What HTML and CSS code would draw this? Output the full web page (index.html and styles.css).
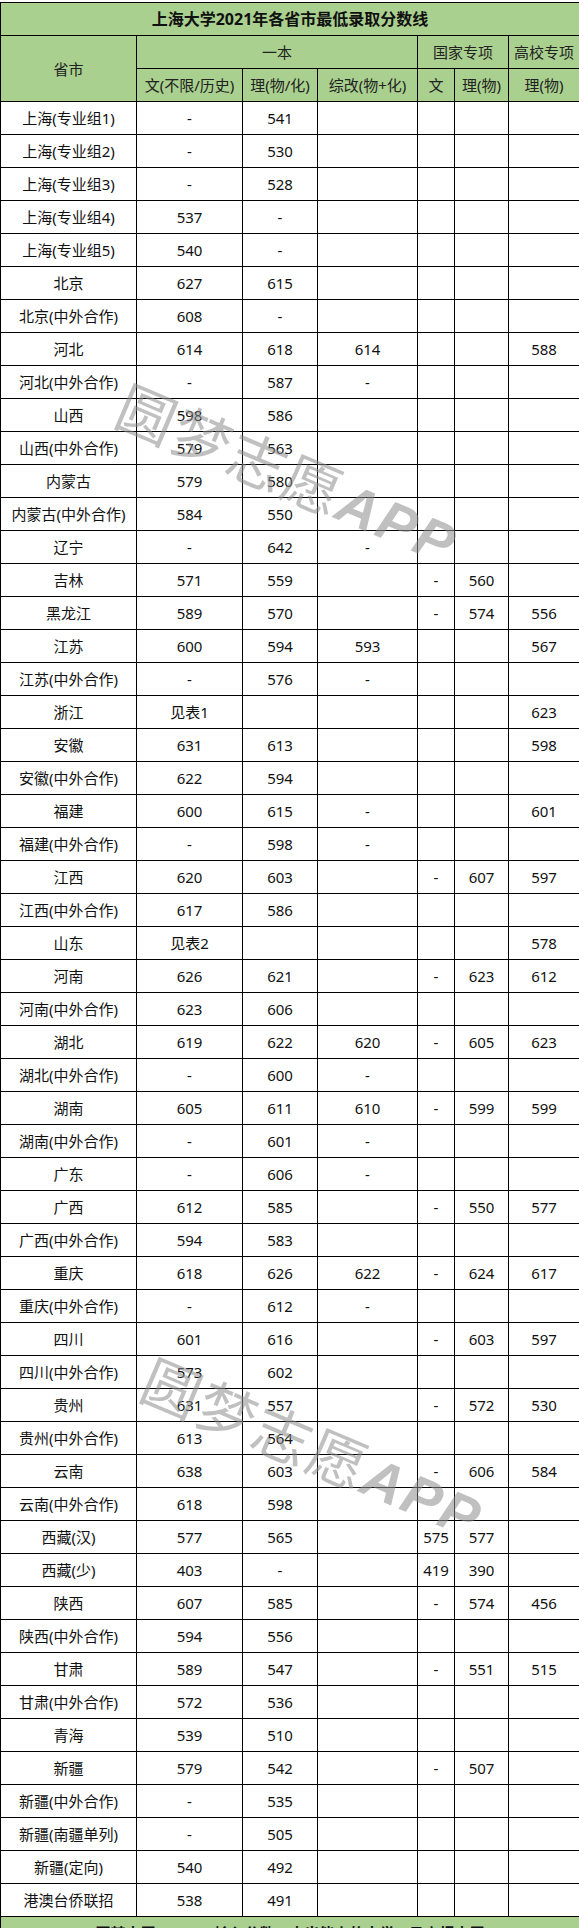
FILE: index.html
```html
<!DOCTYPE html>
<html lang="zh-CN">
<head>
<meta charset="utf-8">
<title>上海大学2021年各省市最低录取分数线</title>
<link rel="stylesheet" href="styles.css">
</head>
<body>
<div class="page">
<table class="scores">
<colgroup>
<col class="c-prov"><col class="c-wen"><col class="c-li"><col class="c-zg"><col class="c-gw"><col class="c-gl"><col class="c-gx">
</colgroup>
<thead>
<tr class="title"><th colspan="7">上海大学2021年各省市最低录取分数线</th></tr>
<tr class="head"><th rowspan="2">省市</th><th colspan="3">一本</th><th colspan="2">国家专项</th><th>高校专项</th></tr>
<tr class="head"><th>文(不限/历史)</th><th>理(物/化)</th><th>综改(物+化)</th><th>文</th><th>理(物)</th><th>理(物)</th></tr>
</thead>
<tbody>
<tr><td>上海(专业组1)</td><td>-</td><td>541</td><td></td><td></td><td></td><td></td></tr>
<tr><td>上海(专业组2)</td><td>-</td><td>530</td><td></td><td></td><td></td><td></td></tr>
<tr><td>上海(专业组3)</td><td>-</td><td>528</td><td></td><td></td><td></td><td></td></tr>
<tr><td>上海(专业组4)</td><td>537</td><td>-</td><td></td><td></td><td></td><td></td></tr>
<tr><td>上海(专业组5)</td><td>540</td><td>-</td><td></td><td></td><td></td><td></td></tr>
<tr><td>北京</td><td>627</td><td>615</td><td></td><td></td><td></td><td></td></tr>
<tr><td>北京(中外合作)</td><td>608</td><td>-</td><td></td><td></td><td></td><td></td></tr>
<tr><td>河北</td><td>614</td><td>618</td><td>614</td><td></td><td></td><td>588</td></tr>
<tr><td>河北(中外合作)</td><td>-</td><td>587</td><td>-</td><td></td><td></td><td></td></tr>
<tr><td>山西</td><td>598</td><td>586</td><td></td><td></td><td></td><td></td></tr>
<tr><td>山西(中外合作)</td><td>579</td><td>563</td><td></td><td></td><td></td><td></td></tr>
<tr><td>内蒙古</td><td>579</td><td>580</td><td></td><td></td><td></td><td></td></tr>
<tr><td>内蒙古(中外合作)</td><td>584</td><td>550</td><td></td><td></td><td></td><td></td></tr>
<tr><td>辽宁</td><td>-</td><td>642</td><td>-</td><td></td><td></td><td></td></tr>
<tr><td>吉林</td><td>571</td><td>559</td><td></td><td>-</td><td>560</td><td></td></tr>
<tr><td>黑龙江</td><td>589</td><td>570</td><td></td><td>-</td><td>574</td><td>556</td></tr>
<tr><td>江苏</td><td>600</td><td>594</td><td>593</td><td></td><td></td><td>567</td></tr>
<tr><td>江苏(中外合作)</td><td>-</td><td>576</td><td>-</td><td></td><td></td><td></td></tr>
<tr><td>浙江</td><td>见表1</td><td></td><td></td><td></td><td></td><td>623</td></tr>
<tr><td>安徽</td><td>631</td><td>613</td><td></td><td></td><td></td><td>598</td></tr>
<tr><td>安徽(中外合作)</td><td>622</td><td>594</td><td></td><td></td><td></td><td></td></tr>
<tr><td>福建</td><td>600</td><td>615</td><td>-</td><td></td><td></td><td>601</td></tr>
<tr><td>福建(中外合作)</td><td>-</td><td>598</td><td>-</td><td></td><td></td><td></td></tr>
<tr><td>江西</td><td>620</td><td>603</td><td></td><td>-</td><td>607</td><td>597</td></tr>
<tr><td>江西(中外合作)</td><td>617</td><td>586</td><td></td><td></td><td></td><td></td></tr>
<tr><td>山东</td><td>见表2</td><td></td><td></td><td></td><td></td><td>578</td></tr>
<tr><td>河南</td><td>626</td><td>621</td><td></td><td>-</td><td>623</td><td>612</td></tr>
<tr><td>河南(中外合作)</td><td>623</td><td>606</td><td></td><td></td><td></td><td></td></tr>
<tr><td>湖北</td><td>619</td><td>622</td><td>620</td><td>-</td><td>605</td><td>623</td></tr>
<tr><td>湖北(中外合作)</td><td>-</td><td>600</td><td>-</td><td></td><td></td><td></td></tr>
<tr><td>湖南</td><td>605</td><td>611</td><td>610</td><td>-</td><td>599</td><td>599</td></tr>
<tr><td>湖南(中外合作)</td><td>-</td><td>601</td><td>-</td><td></td><td></td><td></td></tr>
<tr><td>广东</td><td>-</td><td>606</td><td>-</td><td></td><td></td><td></td></tr>
<tr><td>广西</td><td>612</td><td>585</td><td></td><td>-</td><td>550</td><td>577</td></tr>
<tr><td>广西(中外合作)</td><td>594</td><td>583</td><td></td><td></td><td></td><td></td></tr>
<tr><td>重庆</td><td>618</td><td>626</td><td>622</td><td>-</td><td>624</td><td>617</td></tr>
<tr><td>重庆(中外合作)</td><td>-</td><td>612</td><td>-</td><td></td><td></td><td></td></tr>
<tr><td>四川</td><td>601</td><td>616</td><td></td><td>-</td><td>603</td><td>597</td></tr>
<tr><td>四川(中外合作)</td><td>573</td><td>602</td><td></td><td></td><td></td><td></td></tr>
<tr><td>贵州</td><td>631</td><td>557</td><td></td><td>-</td><td>572</td><td>530</td></tr>
<tr><td>贵州(中外合作)</td><td>613</td><td>564</td><td></td><td></td><td></td><td></td></tr>
<tr><td>云南</td><td>638</td><td>603</td><td></td><td>-</td><td>606</td><td>584</td></tr>
<tr><td>云南(中外合作)</td><td>618</td><td>598</td><td></td><td></td><td></td><td></td></tr>
<tr><td>西藏(汉)</td><td>577</td><td>565</td><td></td><td>575</td><td>577</td><td></td></tr>
<tr><td>西藏(少)</td><td>403</td><td>-</td><td></td><td>419</td><td>390</td><td></td></tr>
<tr><td>陕西</td><td>607</td><td>585</td><td></td><td>-</td><td>574</td><td>456</td></tr>
<tr><td>陕西(中外合作)</td><td>594</td><td>556</td><td></td><td></td><td></td><td></td></tr>
<tr><td>甘肃</td><td>589</td><td>547</td><td></td><td>-</td><td>551</td><td>515</td></tr>
<tr><td>甘肃(中外合作)</td><td>572</td><td>536</td><td></td><td></td><td></td><td></td></tr>
<tr><td>青海</td><td>539</td><td>510</td><td></td><td></td><td></td><td></td></tr>
<tr><td>新疆</td><td>579</td><td>542</td><td></td><td>-</td><td>507</td><td></td></tr>
<tr><td>新疆(中外合作)</td><td>-</td><td>535</td><td></td><td></td><td></td><td></td></tr>
<tr><td>新疆(南疆单列)</td><td>-</td><td>505</td><td></td><td></td><td></td><td></td></tr>
<tr><td>新疆(定向)</td><td>540</td><td>492</td><td></td><td></td><td></td><td></td></tr>
<tr><td>港澳台侨联招</td><td>538</td><td>491</td><td></td><td></td><td></td><td></td></tr>
</tbody>
<tfoot>
<tr class="foot"><td colspan="7">圆梦志愿APP——输入分数，查出能上的大学，马上报志愿</td></tr>
</tfoot>
</table>
<div class="watermark wm-1">圆梦志愿<span class="wm-app">APP</span></div>
<div class="watermark wm-2">圆梦志愿<span class="wm-app">APP</span></div>
</div>
</body>
</html>
```

FILE: styles.css
```css
html, body {
  margin: 0;
  padding: 0;
  background: #ffffff;
}

.page {
  position: relative;
  width: 579px;
  padding-top: 2px;
  overflow: hidden;
}

.scores {
  width: 579px;
  border-collapse: collapse;
  table-layout: fixed;
  font-family: "Noto Sans", "Noto Sans CJK SC", sans-serif;
  font-size: 15px;
  color: #111111;
}

.c-prov { width: 136px; }
.c-wen { width: 106px; }
.c-li { width: 75px; }
.c-zg { width: 100px; }
.c-gw { width: 37px; }
.c-gl { width: 54px; }
.c-gx { width: 71px; }

.scores th,
.scores td {
  border: 1px solid #000000;
  padding: 0;
  text-align: center;
  vertical-align: middle;
  white-space: nowrap;
  font-weight: normal;
  line-height: 20px;
}

.scores tr {
  height: 33px;
}

.scores .title th {
  background: #a9d08e;
  font-weight: bold;
  font-size: 16px;
  color: #111111;
}

.scores .head th {
  background: #a9d08e;
  color: #222222;
}

.scores .foot td {
  background: #a9d08e;
  font-weight: bold;
  font-size: 15px;
}

.watermark {
  position: absolute;
  font-family: "Noto Sans CJK SC", sans-serif;
  font-weight: normal;
  font-size: 58px;
  letter-spacing: 2px;
  color: rgba(140, 140, 140, 0.55);
  white-space: nowrap;
  line-height: 1;
  transform: translate(-50%, -50%) rotate(23deg);
  pointer-events: none;
}

.wm-app {
  font-family: "Liberation Sans", sans-serif;
  font-weight: bold;
  font-style: italic;
  letter-spacing: 3px;
  font-size: 56px;
}

.wm-1 {
  left: 288px;
  top: 474px;
}

.wm-2 {
  left: 313px;
  top: 1448px;
}
```
